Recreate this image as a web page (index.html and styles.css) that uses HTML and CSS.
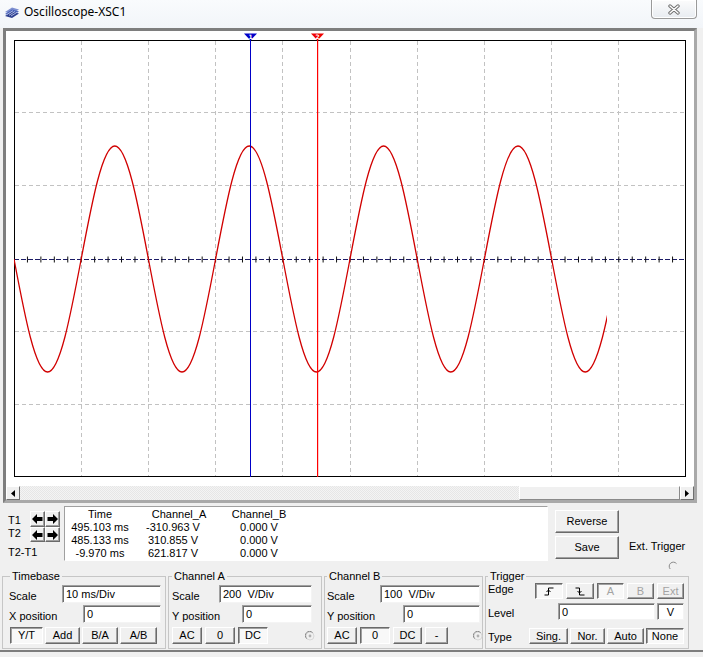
FILE: index.html
```html
<!DOCTYPE html>
<html>
<head>
<meta charset="utf-8">
<title>Oscilloscope-XSC1</title>
<link rel="stylesheet" href="styles.css">
</head>
<body>
<header class="titlebar">
  <svg class="app-icon" viewBox="0 0 16 13" width="16" height="13">
    <path d="M1 6 L8 1.5 L15 3.5 L8 8 Z" fill="#7d8fd0"/>
    <path d="M1 8 L8 3.5 L15 5.5 L8 10 Z" fill="#4a62b8"/>
    <path d="M1 10 L8 5.5 L15 7.5 L8 12 Z" fill="#2d3f8f"/>
    <path d="M3 8.5 L9 4.7 M5 9.3 L11 5.5 M7 10 L13 6.3" stroke="#c9d3f2" stroke-width="0.8"/>
  </svg>
  <span class="title">Oscilloscope-XSC1</span>
  <div class="close">
    <svg width="14" height="11" viewBox="0 0 14 11">
      <path d="M3 2 L11 9 M11 2 L3 9" stroke="#707070" stroke-width="3.4" stroke-linecap="round"/>
      <path d="M3 2 L11 9 M11 2 L3 9" stroke="#fff" stroke-width="1.4" stroke-linecap="round"/>
    </svg>
  </div>
</header>

<section class="scope">
  <svg class="screen" viewBox="6 31 688 455" width="688" height="455">
    <defs>
      <clipPath id="wave-clip"><rect x="14" y="40" width="593" height="437"/></clipPath>
    </defs>
    <rect x="6" y="31" width="688" height="455" fill="#fff"/>
    <g stroke="#c2c2c2" stroke-width="1" stroke-dasharray="4 3" fill="none">
      <path d="M81.5 41V477M148.5 41V477M215.5 41V477M282.5 41V477M350.5 41V477M417.5 41V477M484.5 41V477M551.5 41V477M618.5 41V477"/>
      <path d="M15 112.5H686M15 185.5H686M15 331.5H686M15 404.5H686"/>
    </g>
    <line x1="14" y1="259.5" x2="686" y2="259.5" stroke="#1c1c66" stroke-width="1" stroke-dasharray="5 2"/>
    <line x1="14" y1="259.5" x2="686" y2="259.5" stroke="#111" stroke-width="6" stroke-dasharray="1 12.44" stroke-dashoffset="0.5"/>
    <rect x="14.5" y="40.5" width="671" height="436" fill="none" stroke="#000"/>
    <path clip-path="url(#wave-clip)" fill="none" stroke="#d10000" stroke-width="1.3"
      d="M14 259
         c10.96 57.9 21.44 113 33.6 113 c12.16 0 22.64 -55.1 33.6 -113 c10.96 -57.9 21.44 -113 33.6 -113 c12.16 0 22.64 55.1 33.6 113
         c10.96 57.9 21.44 113 33.6 113 c12.16 0 22.64 -55.1 33.6 -113 c10.96 -57.9 21.44 -113 33.6 -113 c12.16 0 22.64 55.1 33.6 113
         c10.96 57.9 21.44 113 33.6 113 c12.16 0 22.64 -55.1 33.6 -113 c10.96 -57.9 21.44 -113 33.6 -113 c12.16 0 22.64 55.1 33.6 113
         c10.96 57.9 21.44 113 33.6 113 c12.16 0 22.64 -55.1 33.6 -113 c10.96 -57.9 21.44 -113 33.6 -113 c12.16 0 22.64 55.1 33.6 113
         c10.96 57.9 21.44 113 33.6 113 c12.16 0 22.64 -55.1 33.6 -113"/>
    <rect x="250" y="40" width="1" height="437" fill="#0000c8"/>
    <polygon points="244,33.5 257,33.5 250.5,40.5" fill="#0000c8"/>
    <text x="250.5" y="38.6" class="cur-num">1</text>
    <rect x="317" y="40" width="1.2" height="437" fill="#ff0000"/>
    <polygon points="311,33.5 324,33.5 317.5,40.5" fill="#f00000"/>
    <text x="317.5" y="38.6" class="cur-num">2</text>
  </svg>
  <div class="hscroll">
    <span class="sb-btn"><svg width="4" height="7" viewBox="0 0 4 7"><path d="M0 3.5 L4 0 V7 Z" fill="#000"/></svg></span>
    <span class="sb-track"></span>
    <span class="sb-thumb"></span>
    <span class="sb-btn"><svg width="4" height="7" viewBox="0 0 4 7"><path d="M4 3.5 L0 0 V7 Z" fill="#000"/></svg></span>
  </div>
</section>

<section class="readout-row">
  <div class="cursor-ctl">
    <div class="t-row">
      <span class="t-label t1">T1</span>
      <button class="btn arrow r1"><svg width="11" height="10" viewBox="0 0 11 10"><path d="M0 5 L5 0 V3 H10.5 V7 H5 V10 Z" fill="#000"/></svg></button>
      <button class="btn arrow r1"><svg width="11" height="10" viewBox="0 0 11 10"><path d="M11 5 L6 0 V3 H0.5 V7 H6 V10 Z" fill="#000"/></svg></button>
    </div>
    <div class="t-row">
      <span class="t-label t2">T2</span>
      <button class="btn arrow r2"><svg width="11" height="10" viewBox="0 0 11 10"><path d="M0 5 L5 0 V3 H10.5 V7 H5 V10 Z" fill="#000"/></svg></button>
      <button class="btn arrow r2"><svg width="11" height="10" viewBox="0 0 11 10"><path d="M11 5 L6 0 V3 H0.5 V7 H6 V10 Z" fill="#000"/></svg></button>
    </div>
    <span class="t-label t21">T2-T1</span>
  </div>
  <div class="readout">
    <span>Time</span><span class="hdr-a">Channel_A</span><span>Channel_B</span>
    <span>495.103 ms</span><span class="val-a">-310.963 V</span><span>0.000 V</span>
    <span>485.133 ms</span><span class="val-a">310.855 V</span><span>0.000 V</span>
    <span>-9.970 ms</span><span class="val-a">621.817 V</span><span>0.000 V</span>
  </div>
  <div class="rv-buttons">
    <button class="btn big">Reverse</button>
    <button class="btn big">Save</button>
  </div>
  <div class="ext">
    <span>Ext. Trigger</span>
    <svg class="ext-radio" width="10" height="10" viewBox="0 0 10 10"><path d="M2.2 8 A4 4 0 1 1 8.5 2.6" fill="none" stroke="#8a8a8a"/></svg>
  </div>
</section>

<section class="controls">
  <fieldset class="grp timebase">
    <legend>Timebase</legend>
    <div class="row"><span>Scale</span><span class="field w99">10 ms/Div</span></div>
    <div class="row"><span>X position</span><span class="field w78">0</span></div>
    <div class="btn-row g2">
      <button class="btn pressed w33">Y/T</button>
      <button class="btn w35">Add</button>
      <button class="btn w36">B/A</button>
      <button class="btn w37">A/B</button>
    </div>
  </fieldset>

  <fieldset class="grp cha">
    <legend>Channel A</legend>
    <div class="row"><span>Scale</span><span class="field w93">200  V/Div</span></div>
    <div class="row"><span>Y position</span><span class="field w70">0</span></div>
    <div class="btn-row g3">
      <button class="btn w30">AC</button>
      <button class="btn w30">0</button>
      <button class="btn pressed w30">DC</button>
      <svg class="ch-radio" width="10" height="10" viewBox="0 0 10 10"><circle cx="5" cy="5" r="4" fill="none" stroke="#d8d8d8"/><path d="M1.6 7.6 A4 4 0 0 1 7.6 1.6" fill="none" stroke="#8a8a8a"/><circle cx="5" cy="5" r="1.4" fill="#b0b0b0"/></svg>
    </div>
  </fieldset>

  <fieldset class="grp chb">
    <legend>Channel B</legend>
    <div class="row"><span>Scale</span><span class="field w100">100  V/Div</span></div>
    <div class="row"><span>Y position</span><span class="field w77">0</span></div>
    <div class="btn-row g3">
      <button class="btn w30">AC</button>
      <button class="btn pressed w30">0</button>
      <button class="btn w29">DC</button>
      <button class="btn w23">-</button>
      <svg class="ch-radio" width="10" height="10" viewBox="0 0 10 10"><circle cx="5" cy="5" r="4" fill="none" stroke="#d8d8d8"/><path d="M1.6 7.6 A4 4 0 0 1 7.6 1.6" fill="none" stroke="#8a8a8a"/><circle cx="5" cy="5" r="1.4" fill="#b0b0b0"/></svg>
    </div>
  </fieldset>

  <fieldset class="grp trig">
    <legend>Trigger</legend>
    <div class="trow edge-row">
      <span>Edge</span>
      <div class="edge-btns">
        <button class="btn pressed w28"><svg width="10" height="9" viewBox="0 0 10 9"><path d="M0.5 8 H4.5 V1 H9.5" fill="none" stroke="#000"/><path d="M2.5 5 L4.5 3 L6.5 5" fill="none" stroke="#000"/></svg></button>
        <button class="btn w28"><svg width="10" height="9" viewBox="0 0 10 9"><path d="M0.5 1 H4.5 V8 H9.5" fill="none" stroke="#000"/><path d="M2.5 4 L4.5 6 L6.5 4" fill="none" stroke="#000"/></svg></button>
        <button class="btn pressed dis w27">A</button>
        <button class="btn dis w27">B</button>
        <button class="btn dis w27">Ext</button>
      </div>
    </div>
    <div class="trow level-row">
      <span>Level</span>
      <span class="field w97">0</span>
      <span class="field vbox">V</span>
    </div>
    <div class="trow type-row">
      <span>Type</span>
      <div class="type-btns">
        <button class="btn w39">Sing.</button>
        <button class="btn w35">Nor.</button>
        <button class="btn w37">Auto</button>
        <button class="btn pressed w38">None</button>
      </div>
    </div>
  </fieldset>
</section>
</body>
</html>
```

FILE: styles.css
```css
* { box-sizing: border-box; margin: 0; padding: 0; }

body {
  width: 703px;
  height: 657px;
  overflow: hidden;
  background: #f0f0f0;
  font: 11px/13px "Liberation Sans", Arial, sans-serif;
  color: #000;
}

/* title bar */
.titlebar {
  height: 28px;
  background: linear-gradient(#f9fbfd, #f2f5f9);
  display: flex;
  align-items: flex-start;
}
.app-icon { margin: 6px 0 0 4px; }
.title {
  font: 12px/16px "Noto Sans", sans-serif;
  margin: 4px 0 0 4px;
}
.close {
  margin-left: auto;
  margin-right: 6px;
  width: 46px;
  height: 19px;
  border: 1px solid #9a9a9a;
  border-top: none;
  border-radius: 0 0 4px 4px;
  background: linear-gradient(#fcfcfc, #e8ecf1);
  box-shadow: inset 0 0 0 1px #fff;
  display: flex;
  align-items: center;
  justify-content: center;
}

/* scope screen */
.scope {
  margin-left: 3px;
  width: 694px;
  height: 475px;
  border: 3px solid;
  border-color: #7e7e7e #a9a9a9 #a9a9a9 #7e7e7e;
  display: flex;
  flex-direction: column;
  background: #fff;
}
.screen { display: block; }
.cur-num { font: bold 6px "DejaVu Sans", sans-serif; fill: #fff; text-anchor: middle; }

.hscroll {
  display: flex;
  height: 14px;
  background: #f0f0f0;
}
.sb-btn {
  width: 14px;
  display: flex;
  align-items: center;
  justify-content: center;
  background: #f0f0f0;
  border: 1px solid;
  border-color: #fff #6f6f6f #6f6f6f #fff;
}
.sb-track {
  flex: 1;
  background: repeating-conic-gradient(#f4f4f4 0 25%, #e6e6e6 0 50%) 0 0 / 2px 2px;
}
.sb-thumb {
  width: 161px;
  background: #f0f0f0;
  border: 1px solid;
  border-color: #fff #8a8a8a #8a8a8a #fff;
}

/* generic widgets */
.btn {
  font: inherit;
  color: #000;
  background: #f0f0f0;
  border: 1px solid;
  border-color: #fff #6a6a6a #6a6a6a #fff;
  box-shadow: inset -1px -1px #a0a0a0;
  display: flex;
  align-items: center;
  justify-content: center;
  flex-shrink: 0;
  height: 17px;
  padding: 0;
}
.btn.pressed {
  border-color: #6a6a6a #fff #fff #6a6a6a;
  box-shadow: inset 1px 1px #a0a0a0;
  background: #f8f8f8;
}
.btn.dis { color: #a3a3a3; }

.field {
  display: block;
  height: 18px;
  background: #fff;
  border: 1px solid;
  border-color: #a0a0a0 #f4f4f4 #f4f4f4 #a0a0a0;
  box-shadow: inset 1px 1px #6d6d6d;
  padding-left: 3px;
  line-height: 16px;
  white-space: pre;
}

/* readout row */
.readout-row {
  display: flex;
  height: 58px;
  padding-top: 3px;
}
.cursor-ctl {
  margin-left: 8px;
  width: 52px;
  display: flex;
  flex-direction: column;
  padding-top: 5px;
}
.t-row { display: flex; }
.t-label { width: 22px; flex-shrink: 0; }
.t1 { align-self: flex-end; }
.t2 { align-self: flex-start; }
.t21 { width: auto; margin-top: 4px; }
.btn.arrow { width: 15px; }
.btn.arrow.r1 { height: 16px; }
.btn.arrow.r2 { height: 15px; }

.readout {
  margin-left: 4px;
  width: 484px;
  height: 55px;
  background: #fff;
  border: 1px solid;
  border-color: #a0a0a0 #fff #fff #a0a0a0;
  display: grid;
  grid-template-columns: 70px 80px 88px;
  grid-auto-rows: 13px;
  align-content: start;
  padding-top: 1px;
  text-align: center;
}
.hdr-a { padding-left: 8px; }
.val-a { padding-right: 4px; }

.rv-buttons {
  margin-left: 7px;
  padding-top: 4px;
  display: flex;
  flex-direction: column;
  gap: 3px;
}
.btn.big { width: 64px; height: 23px; }

.ext {
  margin-left: 10px;
  padding-top: 34px;
  display: flex;
  flex-direction: column;
}
.ext-radio { flex-shrink: 0; margin: 8px 0 0 39px; }

/* control groups */
.controls {
  display: flex;
  gap: 2px;
  padding-left: 2px;
  margin-top: 9px;
  height: 82px;
  padding-bottom: 1px;
  border-bottom: 2px solid #7d7d7d;
}
.grp {
  border: 1px solid #c6c6c6;
  height: 79px;
  padding: 2px 0 4px;
  min-width: 0;
}
.grp legend { padding: 0 2px; line-height: 13px; }

.timebase { width: 164px; padding-left: 6px; padding-right: 4px; }
.timebase legend { margin-left: 1px; }
.cha { width: 154px; padding-left: 3px; padding-right: 9px; }
.chb { width: 159px; padding-left: 2px; padding-right: 2px; }
.trig { width: 204px; padding-left: 2px; padding-right: 4px; padding-top: 0; }

.row {
  display: flex;
  align-items: flex-end;
  height: 18px;
}
.row + .row { margin-top: 2px; }
.row .field { margin-left: auto; }

.btn-row {
  display: flex;
  align-items: center;
  margin-top: 4px;
  height: 17px;
}
.timebase .btn-row { margin-left: 1px; }
.g2 { gap: 2px; }
.g3 { gap: 3px; }
.ch-radio { flex-shrink: 0; margin-left: auto; margin-right: -3px; }

.trow { display: flex; }
.edge-row { height: 16px; align-items: flex-start; }
.edge-btns { margin-left: auto; display: flex; gap: 3px; }
.edge-btns .btn { height: 16px; }
.level-row { margin-top: 4px; height: 17px; align-items: flex-end; }
.level-row .w97 { margin-left: auto; height: 17px; }
.vbox { width: 27px; height: 17px; margin-left: 2px; padding: 0; text-align: center; }
.type-row { margin-top: 8px; height: 16px; align-items: flex-end; }
.type-btns { margin-left: auto; display: flex; gap: 2px; }
.type-btns .btn { height: 16px; }

/* widths */
.w23 { width: 23px; }
.w27 { width: 27px; }
.w28 { width: 28px; }
.w29 { width: 29px; }
.w30 { width: 30px; }
.w33 { width: 33px; }
.w35 { width: 35px; }
.w36 { width: 36px; }
.w37 { width: 37px; }
.w38 { width: 38px; }
.w39 { width: 39px; }
.w70 { width: 70px; }
.w77 { width: 77px; }
.w78 { width: 78px; }
.w93 { width: 93px; }
.w97 { width: 97px; }
.w99 { width: 99px; }
.w100 { width: 100px; }
```
